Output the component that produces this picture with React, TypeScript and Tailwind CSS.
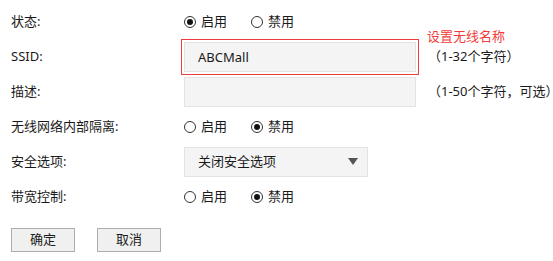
import { useState } from 'react';

function Radio({ checked, label, onClick }: { checked: boolean; label: string; onClick: () => void }) {
  return (
    <label className="flex items-center cursor-pointer" onClick={onClick}>
      <span className="w-[12px] h-[12px] rounded-full border-[1.5px] border-[#333] flex items-center justify-center bg-white">
        {checked && <span className="w-[6px] h-[6px] rounded-full bg-[#111]" />}
      </span>
      <span className="ml-[5px]">{label}</span>
    </label>
  );
}

function RadioPair({ value, onChange }: { value: boolean; onChange: (v: boolean) => void }) {
  return (
    <div className="flex items-center">
      <div className="w-[67px]">
        <Radio checked={value} label="启用" onClick={() => onChange(true)} />
      </div>
      <Radio checked={!value} label="禁用" onClick={() => onChange(false)} />
    </div>
  );
}

function Row({ label, children }: { label: string; children: React.ReactNode }) {
  return (
    <div className="flex items-center h-[35px]">
      <div className="w-[173px] shrink-0">{label}</div>
      <div className="flex items-center">{children}</div>
    </div>
  );
}

export default function App() {
  const [status, setStatus] = useState(true);
  const [isolate, setIsolate] = useState(false);
  const [bandwidth, setBandwidth] = useState(false);
  const [ssid, setSsid] = useState('ABCMall');
  const [desc, setDesc] = useState('');

  return (
    <div
      className="w-[553px] h-[261px] bg-white text-[13px] text-[#1a1a1a] pl-[11px] pt-[4px]"
      style={{ fontFamily: '"Noto Sans", "Noto Sans CJK SC", sans-serif' }}
    >
      <Row label="状态:">
        <RadioPair value={status} onChange={setStatus} />
      </Row>

      <Row label="SSID:">
        <div className="relative flex items-center -ml-[3px]">
          <div className="border border-[#f03c3c] p-[2px]">
            <input
              value={ssid}
              onChange={(e) => setSsid(e.target.value)}
              className="w-[232px] h-[30px] bg-[#f4f4f4] border border-[#e3e3e3] px-[13px] outline-none text-[13px]"
            />
          </div>
          <span className="ml-[9px] whitespace-nowrap">（1-32个字符）</span>
          <span className="absolute left-[246px] top-[-12px] text-[#f03c3c] whitespace-nowrap">设置无线名称</span>
        </div>
      </Row>

      <Row label="描述:">
        <div className="flex items-center">
          <input
            value={desc}
            onChange={(e) => setDesc(e.target.value)}
            className="w-[232px] h-[30px] bg-[#f4f4f4] border border-[#e3e3e3] px-[13px] outline-none text-[13px]"
          />
          <span className="ml-[12px] whitespace-nowrap">（1-50个字符，可选）</span>
        </div>
      </Row>

      <Row label="无线网络内部隔离:">
        <RadioPair value={isolate} onChange={setIsolate} />
      </Row>

      <Row label="安全选项:">
        <div className="w-[184px] h-[30px] bg-[#f4f4f4] border border-[#e3e3e3] flex items-center justify-between pl-[13px] pr-[9px]">
          <span>关闭安全选项</span>
          <svg width="10" height="7" viewBox="0 0 10 7">
            <path d="M0 0 H10 L5 7 Z" fill="#555" />
          </svg>
        </div>
      </Row>

      <Row label="带宽控制:">
        <RadioPair value={bandwidth} onChange={setBandwidth} />
      </Row>

      <div className="flex gap-[22px] mt-[14px]">
        <button className="w-[64px] h-[24px] bg-[#f0f0f0] border border-[#adadad]">确定</button>
        <button className="w-[64px] h-[24px] bg-[#f0f0f0] border border-[#adadad]">取消</button>
      </div>
    </div>
  );
}
